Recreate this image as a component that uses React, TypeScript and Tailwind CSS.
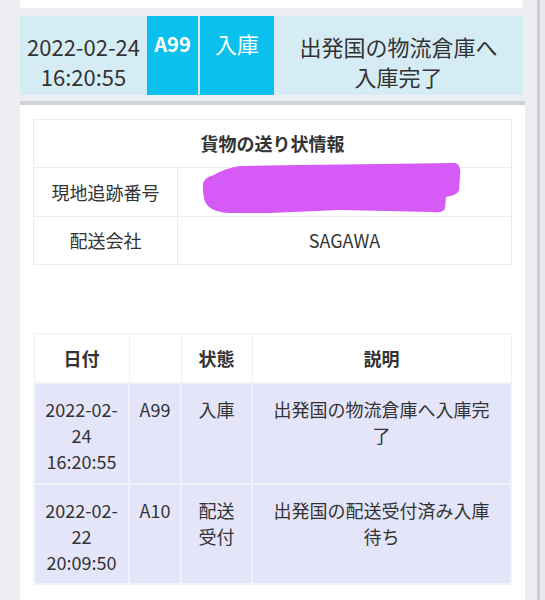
import React from "react";

export default function App() {
  return (
    <div className="relative w-[545px] h-[600px] overflow-hidden bg-[#eceef2] flex font-['Noto_Sans_CJK_JP','Noto_Sans',sans-serif] text-[#333]">
      <div className="w-[537px] pl-[20px] pr-[12px] flex flex-col">
        <div className="h-[8px] bg-white mr-[2px] rounded-b-[3px]" />
        <div className="mt-[8px] mr-[2px] h-[79px] flex bg-[#d5ecf5]">
          <div className="w-[127px] text-center text-[22px] leading-[30px] pt-[15px]">
            <div>2022-02-24</div>
            <div>16:20:55</div>
          </div>
          <div className="w-[51px] bg-[#0cc0ee] text-white font-bold text-[20px] leading-[30px] text-center pt-[13px]">
            A99
          </div>
          <div className="w-[74px] ml-[2px] bg-[#0cc0ee] text-white text-[22px] leading-[30px] text-center pt-[12px]">
            入庫
          </div>
          <div className="flex-1 text-center text-[22px] leading-[30px] pt-[15px]">
            <div>出発国の物流倉庫へ</div>
            <div>入庫完了</div>
          </div>
        </div>
        <div className="mt-[6px] flex-1 bg-white border-t-4 border-[#cfd2da] pt-[14px] px-[13px]">
          <table className="w-full table-fixed border-collapse text-[18px]">
            <colgroup>
              <col className="w-[144px]" />
              <col />
            </colgroup>
            <tbody>
              <tr className="h-[48px]">
                <th colSpan={2} className="border border-[#ededed] font-bold text-center align-middle">
                  貨物の送り状情報
                </th>
              </tr>
              <tr className="h-[49px]">
                <td className="border border-[#ededed] text-center align-middle">現地追跡番号</td>
                <td className="border border-[#ededed]"></td>
              </tr>
              <tr className="h-[48px]">
                <td className="border border-[#ededed] text-center align-middle">配送会社</td>
                <td className="border border-[#ededed] text-center align-middle">SAGAWA</td>
              </tr>
            </tbody>
          </table>

          <table className="mt-[68px] w-full table-fixed border-collapse text-[18px] leading-[26px]">
            <colgroup>
              <col className="w-[95px]" />
              <col className="w-[52px]" />
              <col className="w-[71px]" />
              <col />
            </colgroup>
            <thead>
              <tr className="h-[49px]">
                <th className="border border-[#f0f0f2] font-bold text-center align-middle">日付</th>
                <th className="border border-[#f0f0f2]"></th>
                <th className="border border-[#f0f0f2] font-bold text-center align-middle">状態</th>
                <th className="border border-[#f0f0f2] font-bold text-center align-middle">説明</th>
              </tr>
            </thead>
            <tbody className="bg-[#e5e5fa]">
              <tr className="h-[101px]">
                <td className="border-2 border-[#f2f2fb] text-center align-top pt-[12px]">
                  <div>2022-02-</div>
                  <div>24</div>
                  <div>16:20:55</div>
                </td>
                <td className="border-2 border-[#f2f2fb] text-center align-top pt-[12px]">A99</td>
                <td className="border-2 border-[#f2f2fb] text-center align-top pt-[12px]">入庫</td>
                <td className="border-2 border-[#f2f2fb] text-center align-top pt-[12px]">
                  <div>出発国の物流倉庫へ入庫完</div>
                  <div>了</div>
                </td>
              </tr>
              <tr className="h-[100px]">
                <td className="border-2 border-[#f2f2fb] text-center align-top pt-[12px]">
                  <div>2022-02-</div>
                  <div>22</div>
                  <div>20:09:50</div>
                </td>
                <td className="border-2 border-[#f2f2fb] text-center align-top pt-[12px]">A10</td>
                <td className="border-2 border-[#f2f2fb] text-center align-top pt-[12px]">
                  <div>配送</div>
                  <div>受付</div>
                </td>
                <td className="border-2 border-[#f2f2fb] text-center align-top pt-[12px]">
                  <div>出発国の配送受付済み入庫</div>
                  <div>待ち</div>
                </td>
              </tr>
            </tbody>
          </table>
        </div>
      </div>
      <div className="w-[3px] bg-[#c9ccd4]" />
      <div className="flex-1 bg-[#e6e8ed]" />

      <svg
        className="absolute left-[199px] top-[160px]"
        width="264"
        height="56"
        viewBox="199 160 264 56"
      >
        <path
          d="M203,188 C202,181 206,177 214,175 C220,171 228,168 240,166 L300,165 L380,164 L455,163 C459,164 461,168 460,176 L459,190 C458,194 452,196 446,197 L445,208 C444,212 440,213 432,212 L340,210 L270,213 L230,213 C220,213 212,210 208,206 C204,202 203,195 203,188 Z"
          fill="#d65af6"
        />
      </svg>
    </div>
  );
}
